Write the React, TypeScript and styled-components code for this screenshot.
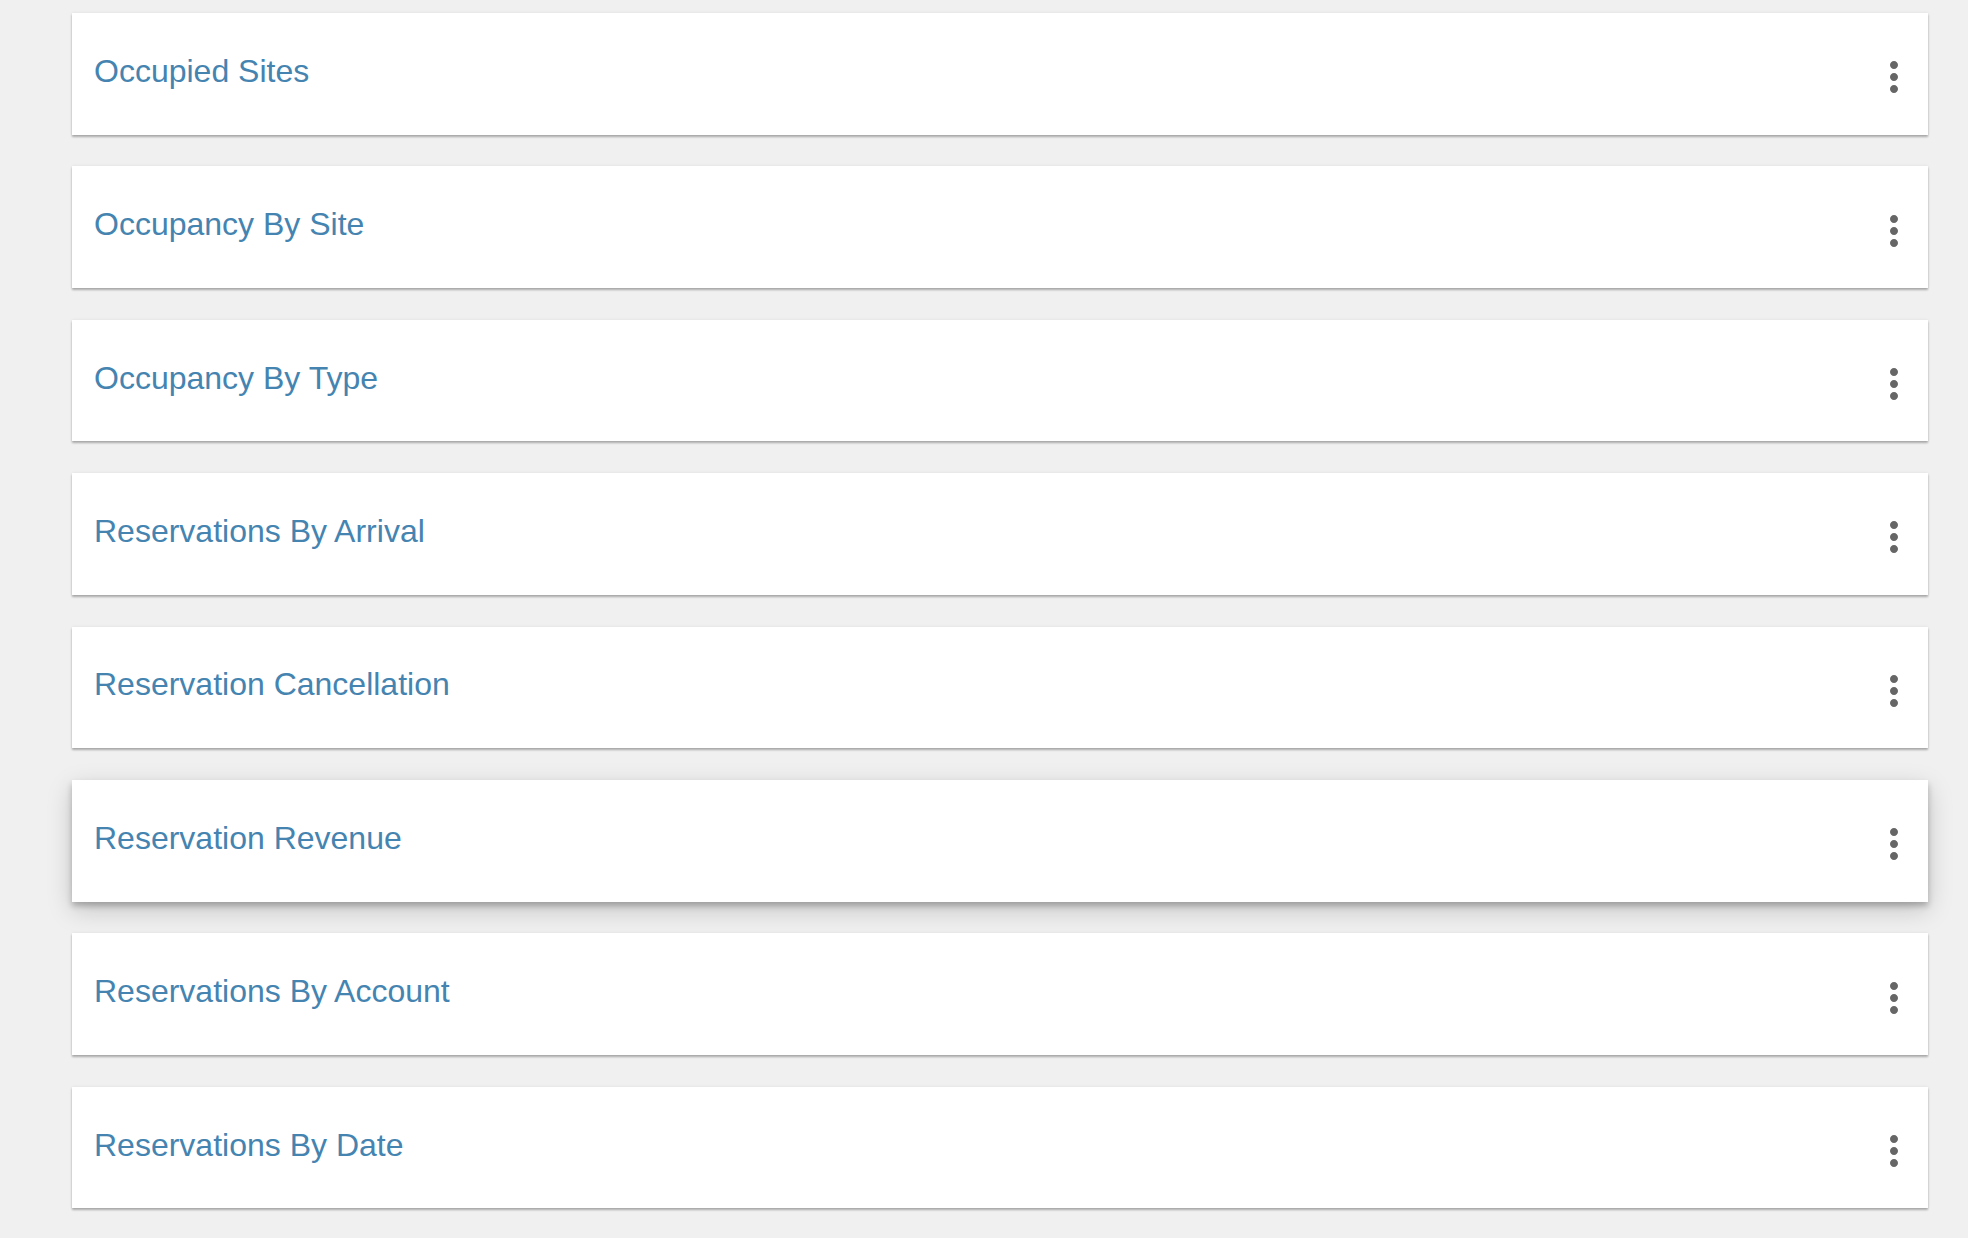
import styled, { createGlobalStyle } from 'styled-components'

const reports = [
  'Occupied Sites',
  'Occupancy By Site',
  'Occupancy By Type',
  'Reservations By Arrival',
  'Reservation Cancellation',
  'Reservation Revenue',
  'Reservations By Account',
  'Reservations By Date',
]

const HOVERED = 'Reservation Revenue'

function MoreVertIcon() {
  return (
    <svg viewBox="0 0 24 24" width="48" height="48" fill="currentColor">
      <path d="M12 8c1.1 0 2-.9 2-2s-.9-2-2-2-2 .9-2 2 .9 2 2 2zm0 2c-1.1 0-2 .9-2 2s.9 2 2 2 2-.9 2-2-.9-2-2-2zm0 6c-1.1 0-2 .9-2 2s.9 2 2 2 2-.9 2-2-.9-2-2-2z" />
    </svg>
  )
}

export default function App() {
  return (
    <>
      <GlobalStyle />
      <ReportList>
        {reports.map(name => (
          <ReportCard key={name} $raised={name === HOVERED}>
            <Title>{name}</Title>
            <MenuButton aria-label="More options">
              <MoreVertIcon />
            </MenuButton>
          </ReportCard>
        ))}
      </ReportList>
    </>
  )
}

const GlobalStyle = createGlobalStyle`
  html, body {
    margin: 0;
    padding: 0;
    background: #f0f0f0;
    font-family: "Liberation Sans", Arial, Helvetica, sans-serif;
  }
`

const ReportList = styled.div`
  display: flex;
  flex-direction: column;
  gap: 31.8px;
  padding: 13px 40px 0 72px;
  min-height: 1238px;
  box-sizing: border-box;
`

const ReportCard = styled.div<{ $raised: boolean }>`
  display: flex;
  align-items: center;
  justify-content: space-between;
  height: 121.6px;
  padding: 0 10px 0 22px;
  box-sizing: border-box;
  background: #ffffff;
  box-shadow: ${props => props.$raised
    ? '0 4px 6px rgba(0, 0, 0, 0.24), 0 8px 24px rgba(0, 0, 0, 0.18)'
    : '0 2px 2px rgba(0, 0, 0, 0.28), 0 0 3px rgba(0, 0, 0, 0.08)'};
  cursor: pointer;
`

const Title = styled.span`
  margin-bottom: 6px;
  font-size: 32px;
  line-height: 1;
  color: #4584b0;
  white-space: nowrap;
`

const MenuButton = styled.button`
  display: flex;
  margin-top: 7px;
  padding: 0;
  border: none;
  background: transparent;
  color: #666666;
  cursor: pointer;
`
